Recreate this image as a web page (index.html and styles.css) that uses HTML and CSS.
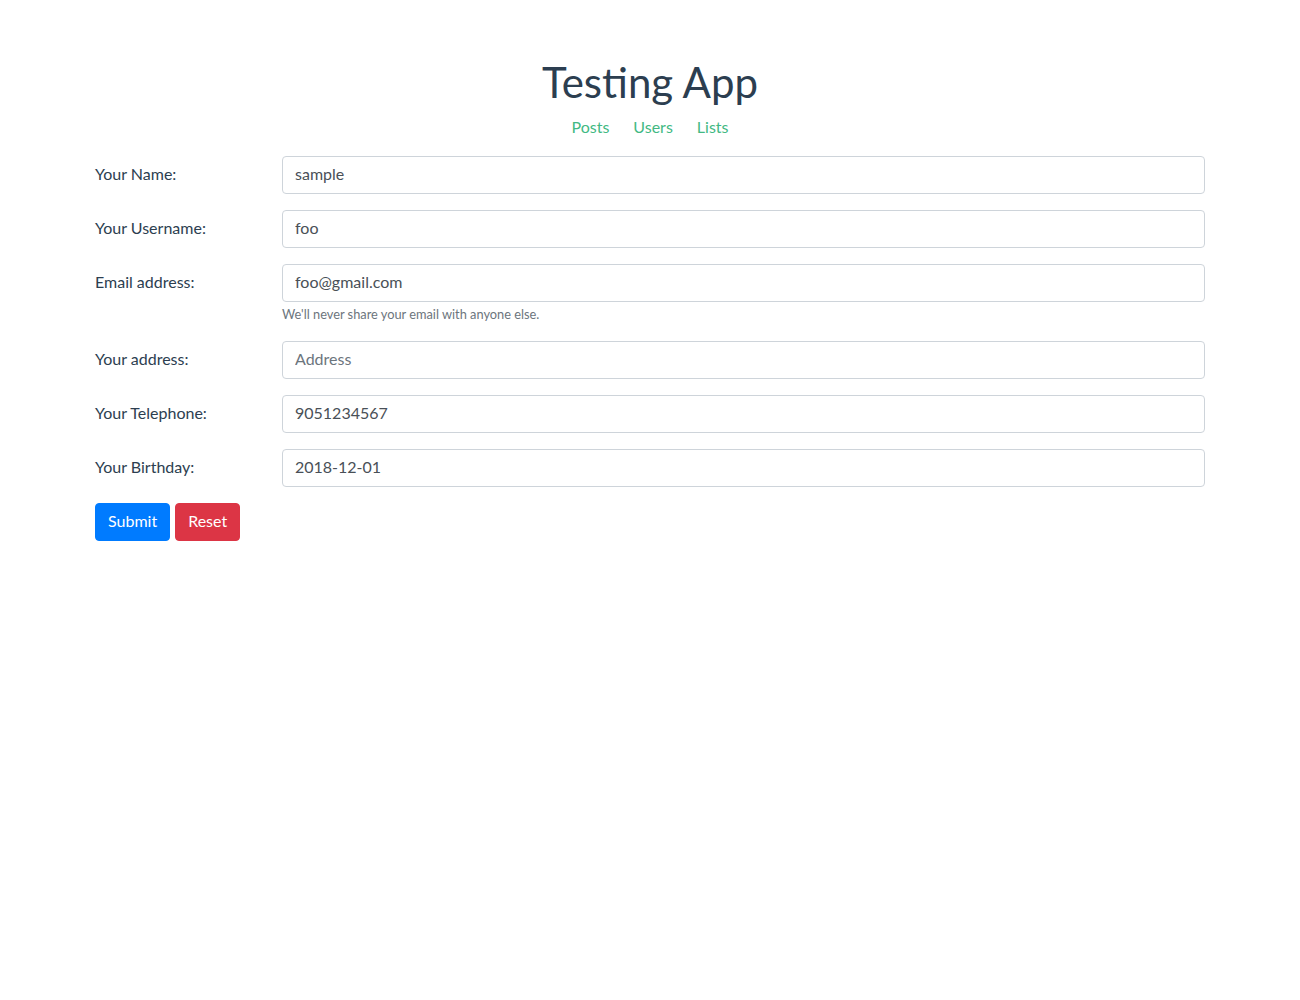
FILE: index.html
```html
<!DOCTYPE html>
<html lang="en">
<head>
<meta charset="utf-8">
<title>Testing App</title>
<link rel="stylesheet" href="styles.css">
</head>
<body>
<div class="app">
  <h1 class="title">Testing App</h1>
  <nav class="nav">
    <a href="#">Posts</a>
    <a href="#">Users</a>
    <a href="#">Lists</a>
  </nav>
  <form class="form">
    <div class="form-row">
      <label class="form-label">Your Name:</label>
      <div class="field"><input class="input" type="text" value="sample"></div>
    </div>
    <div class="form-row">
      <label class="form-label">Your Username:</label>
      <div class="field"><input class="input" type="text" value="foo"></div>
    </div>
    <div class="form-row">
      <label class="form-label">Email address:</label>
      <div class="field">
        <input class="input" type="text" value="foo@gmail.com">
        <small class="help">We'll never share your email with anyone else.</small>
      </div>
    </div>
    <div class="form-row">
      <label class="form-label">Your address:</label>
      <div class="field"><input class="input" type="text" placeholder="Address"></div>
    </div>
    <div class="form-row">
      <label class="form-label">Your Telephone:</label>
      <div class="field"><input class="input" type="text" value="9051234567"></div>
    </div>
    <div class="form-row">
      <label class="form-label">Your Birthday:</label>
      <div class="field"><input class="input" type="text" value="2018-12-01"></div>
    </div>
    <div class="buttons">
      <button type="button" class="btn btn-primary">Submit</button>
      <button type="button" class="btn btn-danger">Reset</button>
    </div>
  </form>
</div>
</body>
</html>
```
FILE: styles.css
```css
* { box-sizing: border-box; }
html, body { margin: 0; padding: 0; background: #fff; }
body {
  font-family: "Lato", "Noto Sans", sans-serif;
  font-size: 16px;
  line-height: 1.5;
  color: #2c3e50;
}
.app {
  width: 1110px;
  margin: 58px auto 0;
}
.title {
  margin: 0 0 9px;
  font-size: 42px;
  font-weight: 400;
  line-height: 48px;
  text-align: center;
  color: #2c3e50;
}
.nav {
  display: flex;
  justify-content: center;
  gap: 24px;
  margin-bottom: 17px;
  line-height: 24px;
}
.nav a {
  color: #42b983;
  text-decoration: none;
}
.form-row {
  display: grid;
  grid-template-columns: 187px 1fr;
  margin-bottom: 16px;
}
.form-label {
  padding-top: 6px;
  padding-bottom: 8px;
  line-height: 24px;
}
.input {
  display: block;
  width: 100%;
  height: 38px;
  padding: 4px 12px 8px;
  font-family: inherit;
  font-size: 16px;
  line-height: 24px;
  color: #495057;
  background: #fff;
  border: 1px solid #ced4da;
  border-radius: 4px;
}
.input::placeholder { color: #6c757d; opacity: 1; }
.help {
  display: block;
  margin-top: 3px;
  margin-bottom: 1px;
  font-size: 12.8px;
  line-height: 19px;
  color: #6c757d;
}
.buttons {
  display: flex;
  gap: 5px;
}
.btn {
  height: 38px;
  padding: 5px 12px 7px;
  font-family: inherit;
  font-size: 16px;
  line-height: 24px;
  color: #fff;
  border: 1px solid transparent;
  border-radius: 4px;
}
.btn-primary { background: #007bff; border-color: #007bff; }
.btn-danger { background: #dc3545; border-color: #dc3545; }
```
